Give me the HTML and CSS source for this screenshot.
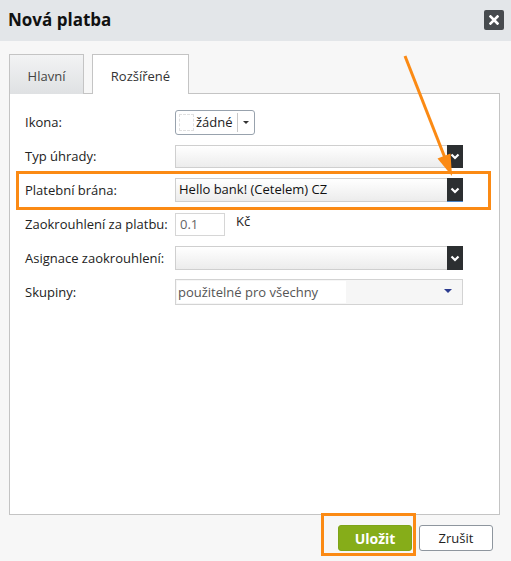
FILE: index.html
```html
<!DOCTYPE html>
<html lang="cs">
<head>
<meta charset="utf-8">
<title>Nová platba</title>
<link rel="stylesheet" href="styles.css">
</head>
<body>
<div class="dialog">
  <div class="header">
    <h1 class="title">Nová platba</h1>
    <div class="close">
      <svg width="10" height="10" viewBox="0 0 10 10"><path d="M1.5 1.5 L8.5 8.5 M8.5 1.5 L1.5 8.5" stroke="#fff" stroke-width="2.6" stroke-linecap="square"/></svg>
    </div>
  </div>
  <div class="content">
    <div class="tabs">
      <div class="tab">Hlavní</div>
      <div class="tab active">Rozšířené</div>
    </div>
    <div class="panel">
      <div class="row">
        <div class="label">Ikona:</div>
        <div class="iconpick">
          <span class="ph"></span>
          <span class="iconname">žádné</span>
          <span class="sep"></span>
          <span class="caret"></span>
        </div>
      </div>
      <div class="row">
        <div class="label">Typ úhrady:</div>
        <div class="select"><span class="val"></span><span class="arrow"><svg width="10" height="7" viewBox="0 0 10 7"><path d="M1.5 1.5 L5 5 L8.5 1.5" stroke="#fff" stroke-width="2.2" fill="none"/></svg></span></div>
      </div>
      <div class="row">
        <div class="label">Platební brána:</div>
        <div class="select sel-tall"><span class="val">Hello bank! (Cetelem) CZ</span><span class="arrow focus"><svg width="10" height="7" viewBox="0 0 10 7"><path d="M1.5 1.5 L5 5 L8.5 1.5" stroke="#fff" stroke-width="2.2" fill="none"/></svg></span></div>
      </div>
      <div class="row">
        <div class="label">Zaokrouhlení za platbu:</div>
        <div class="num">0.1</div>
        <div class="unit">Kč</div>
      </div>
      <div class="row">
        <div class="label">Asignace zaokrouhlení:</div>
        <div class="select sel-tall"><span class="val"></span><span class="arrow"><svg width="10" height="7" viewBox="0 0 10 7"><path d="M1.5 1.5 L5 5 L8.5 1.5" stroke="#fff" stroke-width="2.2" fill="none"/></svg></span></div>
      </div>
      <div class="row">
        <div class="label">Skupiny:</div>
        <div class="multi"><span class="mval">použitelné pro všechny</span><span class="tri"></span></div>
      </div>
    </div>
    <div class="footer">
      <button class="btn save">Uložit</button>
      <button class="btn cancel">Zrušit</button>
    </div>
  </div>
  <svg class="annot" width="511" height="561" viewBox="0 0 511 561">
    <rect x="101.5" y="56.5" width="82" height="36" fill="none" stroke="#fb8a14" stroke-width="3"/>
    <rect x="17.5" y="172.5" width="472" height="36" fill="none" stroke="#fb8a14" stroke-width="3"/>
    <rect x="322.5" y="514.5" width="92" height="40" fill="none" stroke="#fb8a14" stroke-width="3"/>
    <line x1="405" y1="56" x2="445" y2="158" stroke="#fb8a14" stroke-width="3"/>
    <polygon points="452,176 437.5,158.5 450.5,153.5" fill="#fb8a14"/>
  </svg>
</div>
</body>
</html>
```
FILE: styles.css
```css
* { box-sizing: border-box; }
html, body { margin: 0; padding: 0; }
body {
  background: #f7f7f7;
  font-family: "Open Sans", "Noto Sans", sans-serif;
  font-size: 13px;
  color: #222;
}
.dialog {
  position: relative;
  width: 511px;
  height: 561px;
  background: #f7f7f7;
}
.header {
  height: 41px;
  background: #e3e6e9;
  display: flex;
  align-items: center;
  justify-content: space-between;
  padding: 0 7px 2px 8px;
}
.title {
  margin: 0;
  font-size: 17px;
  font-weight: 700;
  color: #111;
  letter-spacing: 0;
}
.close {
  width: 20px;
  height: 20px;
  background: #474b4f;
  border-radius: 2px;
  display: flex;
  align-items: center;
  justify-content: center;
}
.content {
  padding: 13px 11px 0 9px;
}
.tabs {
  display: flex;
  gap: 8px;
  height: 39px;
  position: relative;
  z-index: 1;
}
.tab {
  height: 40px;
  width: 75px;
  border: 1px solid #c4c4c4;
  border-bottom: none;
  background: linear-gradient(#f2f3f4, #dfe1e3);
  color: #444;
  display: flex;
  align-items: center;
  justify-content: center;
  padding-top: 2px;
}
.tab.active {
  width: 97px;
  background: #fff;
  color: #333;
}
.panel {
  height: 422px;
  border: 1px solid #c4c4c4;
  background: #fff;
  padding: 11px 0 0 15px;
}
.row {
  height: 34px;
  display: flex;
  align-items: center;
}
.label {
  width: 150px;
  color: #222;
}
.iconpick {
  width: 80px;
  height: 25px;
  border: 1px solid #98a2ad;
  border-radius: 3px;
  display: flex;
  align-items: center;
  padding-left: 3px;
  background: #fff;
}
.ph {
  width: 15px;
  height: 17px;
  border: 1px dashed #e0e0e0;
  margin-right: 2px;
}
.iconname { color: #222; }
.sep {
  width: 1px;
  height: 19px;
  background: #c8c8c8;
  margin-left: 4px;
}
.caret {
  width: 0; height: 0;
  border-left: 3px solid transparent;
  border-right: 3px solid transparent;
  border-top: 3px solid #333;
  margin-left: 5px;
}
.select {
  width: 288px;
  height: 23px;
  display: flex;
  border: 1px solid #cfcfcf;
  border-right: none;
  background: linear-gradient(#ffffff, #ececec);
}
.sel-tall { height: 24px; }
.val {
  flex: 1;
  padding-left: 3px;
  line-height: 21px;
  color: #111;
  white-space: nowrap;
}
.arrow {
  width: 16px;
  margin: -1px 0;
  background: #2c2f31;
  display: flex;
  align-items: center;
  justify-content: center;
}
.arrow.focus {
  box-shadow: inset 0 -1px 0 #4a84c8;
}
.num {
  width: 50px;
  height: 23px;
  border: 1px solid #d6d6d6;
  padding-left: 4px;
  line-height: 21px;
  color: #666;
  background: #fff;
}
.unit {
  margin-left: 11px;
  margin-top: -6px;
  color: #222;
}
.multi {
  width: 288px;
  height: 26px;
  border: 1px solid #d3d3d3;
  background: #f6f6f6;
  display: flex;
  align-items: center;
  justify-content: space-between;
  padding: 0 10px 0 1px;
}
.mval {
  background: #fff;
  color: #555;
  width: 169px;
  padding-left: 1px;
  line-height: 22px;
  white-space: nowrap;
}
.tri {
  width: 0; height: 0;
  border-left: 4px solid transparent;
  border-right: 4px solid transparent;
  border-top: 4px solid #2b3b8f;
  margin-top: -2px;
}
.footer {
  display: flex;
  justify-content: flex-end;
  gap: 7px;
  padding: 10px 7px 0 0;
}
.btn {
  width: 74px;
  height: 26px;
  font-family: "Open Sans", "Noto Sans", sans-serif;
  padding: 0;
  border-radius: 3px;
  cursor: pointer;
}
.save {
  background: #86ad19;
  border: 1px solid #7ea418;
  color: #fff;
  font-weight: 700;
  font-size: 14px;
}
.cancel {
  background: #fff;
  border: 1px solid #8e969e;
  color: #222;
  font-size: 13px;
}
.annot {
  position: absolute;
  left: 0;
  top: 0;
  pointer-events: none;
}
```
